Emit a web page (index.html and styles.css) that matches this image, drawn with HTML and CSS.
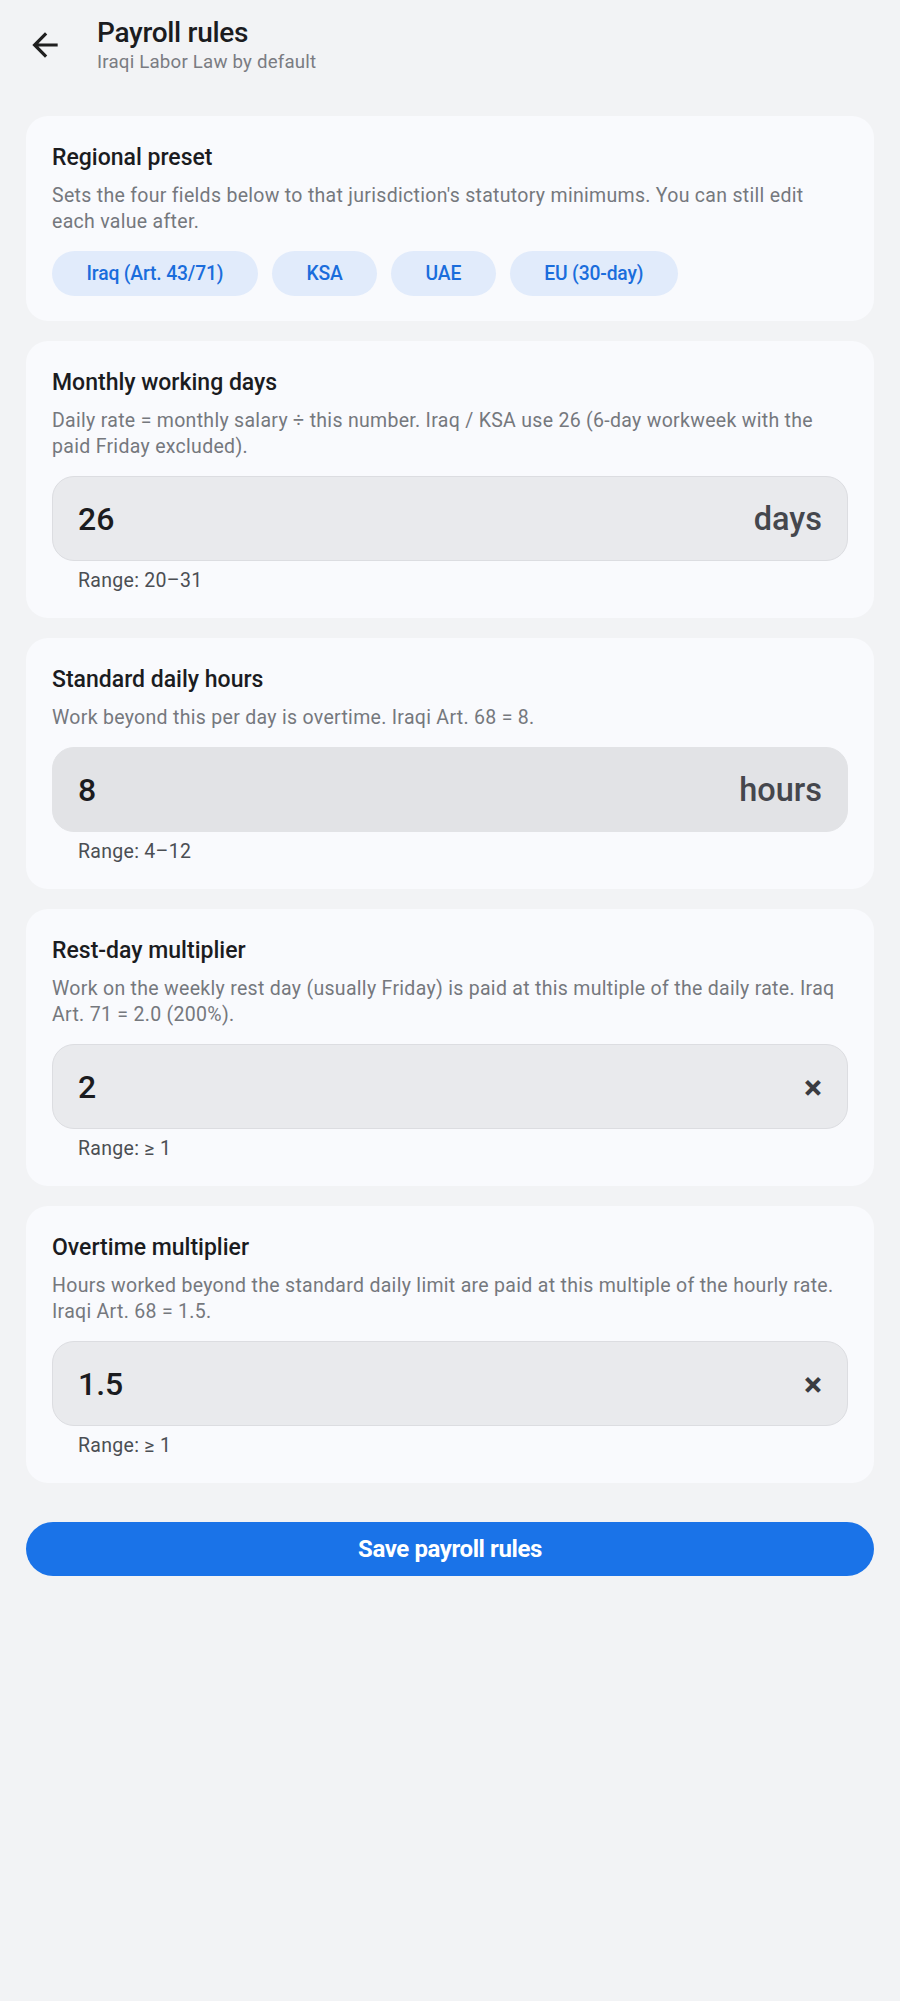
FILE: index.html
```html
<!DOCTYPE html>
<html lang="en">
<head>
<meta charset="utf-8">
<title>Payroll rules</title>
<link rel="stylesheet" href="styles.css">
</head>
<body>
<div class="page">
  <header class="header">
    <svg class="back" viewBox="0 0 24 24" aria-hidden="true"><path d="M20 11H7.83l5.59-5.59L12 4l-8 8 8 8 1.41-1.41L7.83 13H20v-2z"/></svg>
    <div class="header-text">
      <h1 class="title">Payroll rules</h1>
      <div class="subtitle">Iraqi Labor Law by default</div>
    </div>
  </header>

  <main class="cards">
    <section class="card card-preset">
      <h2 class="card-title">Regional preset</h2>
      <p class="card-desc">Sets the four fields below to that jurisdiction's statutory minimums. You can still edit each value after.</p>
      <div class="chips">
        <button class="chip">Iraq (Art. 43/71)</button>
        <button class="chip">KSA</button>
        <button class="chip">UAE</button>
        <button class="chip">EU (30-day)</button>
      </div>
    </section>

    <section class="card">
      <h2 class="card-title">Monthly working days</h2>
      <p class="card-desc">Daily rate = monthly salary ÷ this number. Iraq / KSA use 26 (6-day workweek with the paid Friday excluded).</p>
      <div class="field"><span class="value">26</span><span class="suffix">days</span></div>
      <div class="hint">Range: 20–31</div>
    </section>

    <section class="card">
      <h2 class="card-title">Standard daily hours</h2>
      <p class="card-desc">Work beyond this per day is overtime. Iraqi Art. 68 = 8.</p>
      <div class="field field-hover"><span class="value">8</span><span class="suffix">hours</span></div>
      <div class="hint">Range: 4–12</div>
    </section>

    <section class="card">
      <h2 class="card-title">Rest-day multiplier</h2>
      <p class="card-desc">Work on the weekly rest day (usually Friday) is paid at this multiple of the daily rate. Iraq Art. 71 = 2.0 (200%).</p>
      <div class="field"><span class="value">2</span><span class="suffix suffix-x">×</span></div>
      <div class="hint">Range: ≥ 1</div>
    </section>

    <section class="card">
      <h2 class="card-title">Overtime multiplier</h2>
      <p class="card-desc">Hours worked beyond the standard daily limit are paid at this multiple of the hourly rate. Iraqi Art. 68 = 1.5.</p>
      <div class="field"><span class="value">1.5</span><span class="suffix suffix-x">×</span></div>
      <div class="hint">Range: ≥ 1</div>
    </section>
  </main>

  <button class="save">Save payroll rules</button>
</div>
</body>
</html>
```

FILE: styles.css
```css
* { box-sizing: border-box; }

html, body {
  margin: 0;
  padding: 0;
  background: #f2f3f5;
}

body {
  font-family: Roboto, "Noto Sans", "Liberation Sans", sans-serif;
  color: #1b1c1f;
}

.page {
  padding: 16px 26px 40px;
}

.header {
  display: flex;
  align-items: center;
  gap: 33px;
}

.back {
  width: 38px;
  height: 38px;
  fill: #1f1f1f;
  flex: none;
}

.header-text {
  display: flex;
  flex-direction: column;
}

.title {
  margin: 0;
  font-size: 28px;
  line-height: 34px;
  font-weight: 500;
  color: #1b1c1f;
  letter-spacing: -0.3px;
}

.subtitle {
  font-size: 18.7px;
  line-height: 24px;
  color: #7a7c82;
  letter-spacing: 0.2px;
}

.cards {
  margin-top: 42px;
  display: flex;
  flex-direction: column;
  gap: 20px;
}

.card {
  background: #f9fafd;
  border-radius: 22px;
  padding: 26px 26px 24px;
}

.card-preset {
  padding-bottom: 25px;
}

.card-title {
  margin: 0;
  font-size: 23px;
  line-height: 32px;
  font-weight: 500;
  color: #1b1c1f;
}

.card-desc {
  margin: 9px 0 0;
  font-size: 19.5px;
  line-height: 26px;
  color: #75787d;
  letter-spacing: 0.3px;
}

.chips {
  margin-top: 16px;
  display: flex;
  gap: 14px;
}

.chip {
  height: 45px;
  padding: 0 34.5px;
  border: none;
  border-radius: 23px;
  background: #e1ebfb;
  color: #1a6ddc;
  font-family: inherit;
  font-size: 19.3px;
  font-weight: 500;
  letter-spacing: -0.15px;
}

.field {
  margin-top: 16px;
  height: 85px;
  border-radius: 22px;
  background: #e9eaed;
  border: 1px solid #dcdde1;
  display: flex;
  align-items: center;
  justify-content: space-between;
  padding: 0 25px;
}

.field-hover {
  background: #e2e3e6;
  border-color: #e2e3e6;
}

.value {
  font-size: 32px;
  font-weight: 500;
  color: #1b1c1f;
}

.suffix {
  font-size: 32.5px;
  font-weight: 500;
  color: #45474d;
}

.suffix-x {
  font-size: 34px;
  font-weight: 700;
  color: #3a3c41;
}

.hint {
  margin-top: 7px;
  padding-left: 26px;
  font-size: 19.5px;
  line-height: 26px;
  color: #4b4e53;
  letter-spacing: 0.3px;
}

.save {
  display: block;
  width: 100%;
  margin-top: 39px;
  height: 54px;
  border: none;
  border-radius: 27px;
  background: #1a73e8;
  color: #ffffff;
  font-family: inherit;
  font-size: 24px;
  font-weight: 700;
  letter-spacing: -0.4px;
}
```
